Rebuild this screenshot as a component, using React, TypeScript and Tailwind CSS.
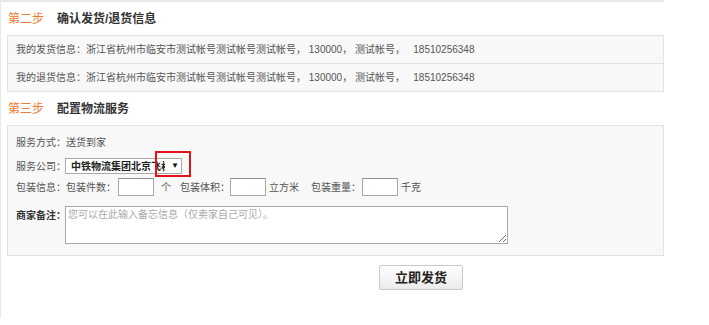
const FONT = { fontFamily: '"Liberation Sans", "Noto Sans CJK SC", sans-serif' };

const StepTitle: React.FC<{ step: string; title: string }> = ({ step, title }) => (
  <div className="flex h-[33px] items-center pl-[1px] pt-[1px] text-[12px]">
    <span className="text-[#ec7a32]">{step}</span>
    <span className="ml-[13px] font-bold text-[#333]">{title}</span>
  </div>
);

const Box: React.FC<{ w: string }> = ({ w }) => (
  <input
    type="text"
    className={`${w} h-[18px] border border-[#a9a9a9] border-t-[#8e8e8e] bg-white outline-none`}
  />
);

export default function App() {
  return (
    <div className="h-[325px] w-[709px] overflow-hidden bg-white" style={FONT}>
      <div className="h-[318px] w-[664px] border-l border-t-2 border-[#e8e8e8] pl-[6px]">
        <StepTitle step="第二步" title="确认发货/退货信息" />

        <div className="border border-[#e2e2e2] bg-[#f8f8f8] text-[10px] text-[#555]">
          <div className="flex h-[28px] items-center border-b border-[#e2e2e2] pl-[8px]">
            我的发货信息：浙江省杭州市临安市测试帐号测试帐号测试帐号，&nbsp;130000，&nbsp;测试帐号，&nbsp;&nbsp;&nbsp;18510256348
          </div>
          <div className="flex h-[27px] items-center pl-[8px]">
            我的退货信息：浙江省杭州市临安市测试帐号测试帐号测试帐号，&nbsp;130000，&nbsp;测试帐号，&nbsp;&nbsp;&nbsp;18510256348
          </div>
        </div>

        <StepTitle step="第三步" title="配置物流服务" />

        <div className="border border-[#e2e2e2] bg-[#f8f8f8] pb-[11px] pl-[8px] text-[10px] text-[#555]">
          <div className="mt-[8px] flex h-[17px] items-center">服务方式：送货到家</div>

          <div className="mt-[7px] flex h-[16px] items-center">
            <span>服务公司：</span>
            <div className="relative ml-[-1px] flex h-[16px] w-[117px] items-center border border-[#a9a9a9] bg-white pl-[5px]">
              <span className="w-[94px] overflow-hidden whitespace-nowrap text-[10px] font-bold text-[#222]">
                中铁物流集团北京飞机
              </span>
              <span className="ml-[6px] text-[8px] text-[#111]">▼</span>
              <div className="absolute left-[89px] top-[-8px] h-[26px] w-[36px] border-2 border-[#e0141a]" />
            </div>
          </div>

          <div className="mt-[4px] flex h-[18px] items-center">
            <span>包装信息：包装件数：</span>
            <span className="ml-[2px]"><Box w="w-[36px]" /></span>
            <span className="ml-[7px]">个</span>
            <span className="ml-[9px]">包装体积：</span>
            <Box w="w-[36px]" />
            <span className="ml-[3px]">立方米</span>
            <span className="ml-[12px]">包装重量：</span>
            <span className="ml-[1px]"><Box w="w-[36px]" /></span>
            <span className="ml-[3px]">千克</span>
          </div>

          <div className="mt-[10px] flex items-start">
            <span className="mt-[2px] font-bold text-[#333]">商家备注：</span>
            <textarea
              placeholder="您可以在此输入备忘信息（仅卖家自己可见）。"
              className="ml-[-1px] h-[38px] w-[443px] border border-[#a9a9a9] bg-white px-[2px] py-[1px] text-[10px] leading-[14px] text-[#333] outline-none placeholder:text-[#aaa]"
            />
          </div>
        </div>

        <div className="mt-[9px] pl-[372px]">
          <button className="flex h-[25px] w-[84px] items-center justify-center rounded-[2px] border border-[#c9c9c9] bg-gradient-to-b from-white to-[#ebebeb] text-[13px] font-bold text-[#222]">
            立即发货
          </button>
        </div>
      </div>
    </div>
  );
}
